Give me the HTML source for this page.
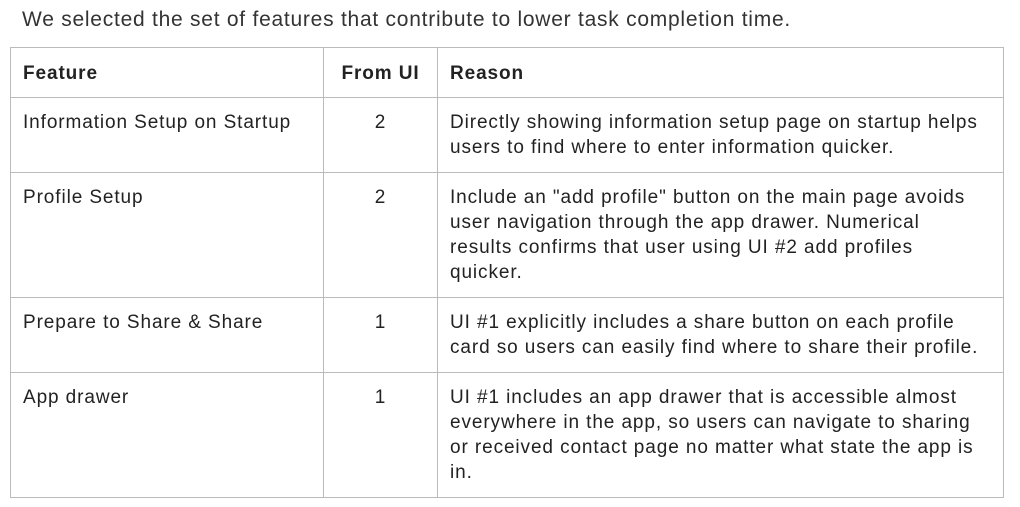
<!DOCTYPE html>
<html><head><style>
body{margin:0;background:#fff;font-family:"Liberation Sans",sans-serif;color:#222;width:1020px;height:507px;overflow:hidden;position:relative}
.t{position:absolute;left:22px;top:8px;font-size:21px;letter-spacing:0.75px;color:#333;white-space:nowrap}
table{position:absolute;left:10px;top:47px;border-collapse:collapse;font-size:19px;line-height:25px;letter-spacing:0.9px;table-layout:fixed;width:993px}
td,th{border:1px solid #bbb;padding:12px 0 12px 12px;vertical-align:top;text-align:left;white-space:nowrap;overflow:hidden}
th{font-weight:bold;padding:13px 0 11px 12px;letter-spacing:0.9px}
.c{text-align:center;padding-left:0}
</style></head><body>
<div class="t">We selected the set of features that contribute to lower task completion time.</div>
<table>
<colgroup><col style="width:313px"><col style="width:114px"><col style="width:566px"></colgroup>
<tr style="height:50px"><th>Feature</th><th class="c">From UI</th><th>Reason</th></tr>
<tr style="height:75px"><td>Information Setup on Startup</td><td class="c">2</td><td>Directly showing information setup page on startup helps<br>users to find where to enter information quicker.</td></tr>
<tr style="height:125px"><td>Profile Setup</td><td class="c">2</td><td>Include an "add profile" button on the main page avoids<br>user navigation through the app drawer. Numerical<br>results confirms that user using UI #2 add profiles<br>quicker.</td></tr>
<tr style="height:75px"><td>Prepare to Share &amp; Share</td><td class="c">1</td><td>UI #1 explicitly includes a share button on each profile<br>card so users can easily find where to share their profile.</td></tr>
<tr style="height:125px"><td>App drawer</td><td class="c">1</td><td>UI #1 includes an app drawer that is accessible almost<br>everywhere in the app, so users can navigate to sharing<br>or received contact page no matter what state the app is<br>in.</td></tr>
</table>
</body></html>
